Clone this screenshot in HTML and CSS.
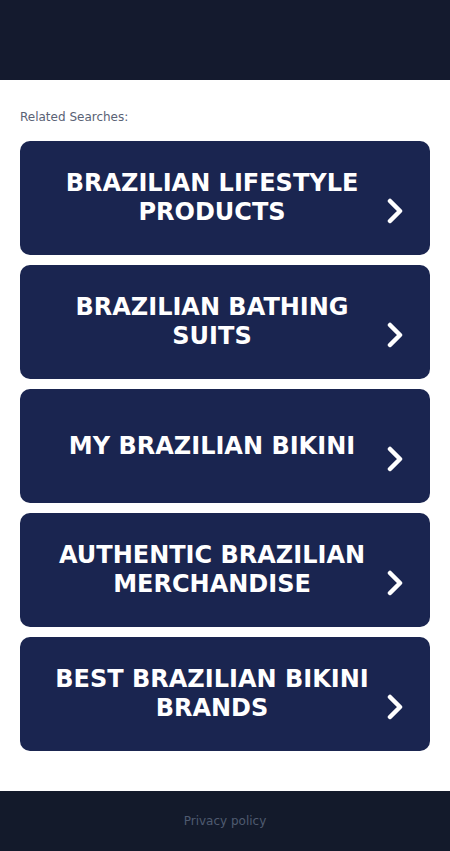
FILE: index.html
```html
<!DOCTYPE html>
<html>
<head>
<meta charset="utf-8">
<link rel="stylesheet" href="styles.css">
</head>
<body>
<header class="top"></header>
<main class="content">
  <div class="label">Related Searches:</div>
  <div class="list">
    <a class="btn" href="#"><span class="btn-text">BRAZILIAN LIFESTYLE PRODUCTS</span><svg class="chev" viewBox="0 0 26 26"><path d="M6 3 L16 13 L6 23"/></svg></a>
    <a class="btn" href="#"><span class="btn-text">BRAZILIAN BATHING SUITS</span><svg class="chev" viewBox="0 0 26 26"><path d="M6 3 L16 13 L6 23"/></svg></a>
    <a class="btn" href="#"><span class="btn-text">MY BRAZILIAN BIKINI</span><svg class="chev" viewBox="0 0 26 26"><path d="M6 3 L16 13 L6 23"/></svg></a>
    <a class="btn" href="#"><span class="btn-text">AUTHENTIC BRAZILIAN MERCHANDISE</span><svg class="chev" viewBox="0 0 26 26"><path d="M6 3 L16 13 L6 23"/></svg></a>
    <a class="btn" href="#"><span class="btn-text">BEST BRAZILIAN BIKINI BRANDS</span><svg class="chev" viewBox="0 0 26 26"><path d="M6 3 L16 13 L6 23"/></svg></a>
  </div>
</main>
<footer class="foot"><a href="#" class="privacy">Privacy policy</a></footer>
</body>
</html>
```
FILE: styles.css
```css
* { box-sizing: border-box; }
html, body { margin: 0; padding: 0; background: #ffffff; }
body { font-family: "DejaVu Sans", sans-serif; }
.top { height: 80px; background: #141a2e; }
.content { padding: 30px 20px 40px; }
.label { font-size: 12px; color: #5a6275; line-height: 15px; margin-bottom: 16px; }
.list { display: flex; flex-direction: column; gap: 10px; }
.btn {
  display: flex; align-items: center;
  height: 114px; background: #1a2550; border-radius: 10px;
  padding: 0 20px 0 20px; text-decoration: none; color: #ffffff;
}
.btn-text {
  flex: 1; text-align: center; font-weight: bold; font-size: 24px;
  line-height: 29px; letter-spacing: 0; padding: 0 4px;
}
.chev { width: 26px; height: 26px; flex: none; margin-top: 26px; }
.chev path { fill: none; stroke: #ffffff; stroke-width: 4.5; stroke-linecap: round; stroke-linejoin: round; }
.foot { height: 60px; background: #131a2b; display: flex; align-items: center; justify-content: center; }
.privacy { font-size: 12px; color: #4f5a70; text-decoration: none; }
```
